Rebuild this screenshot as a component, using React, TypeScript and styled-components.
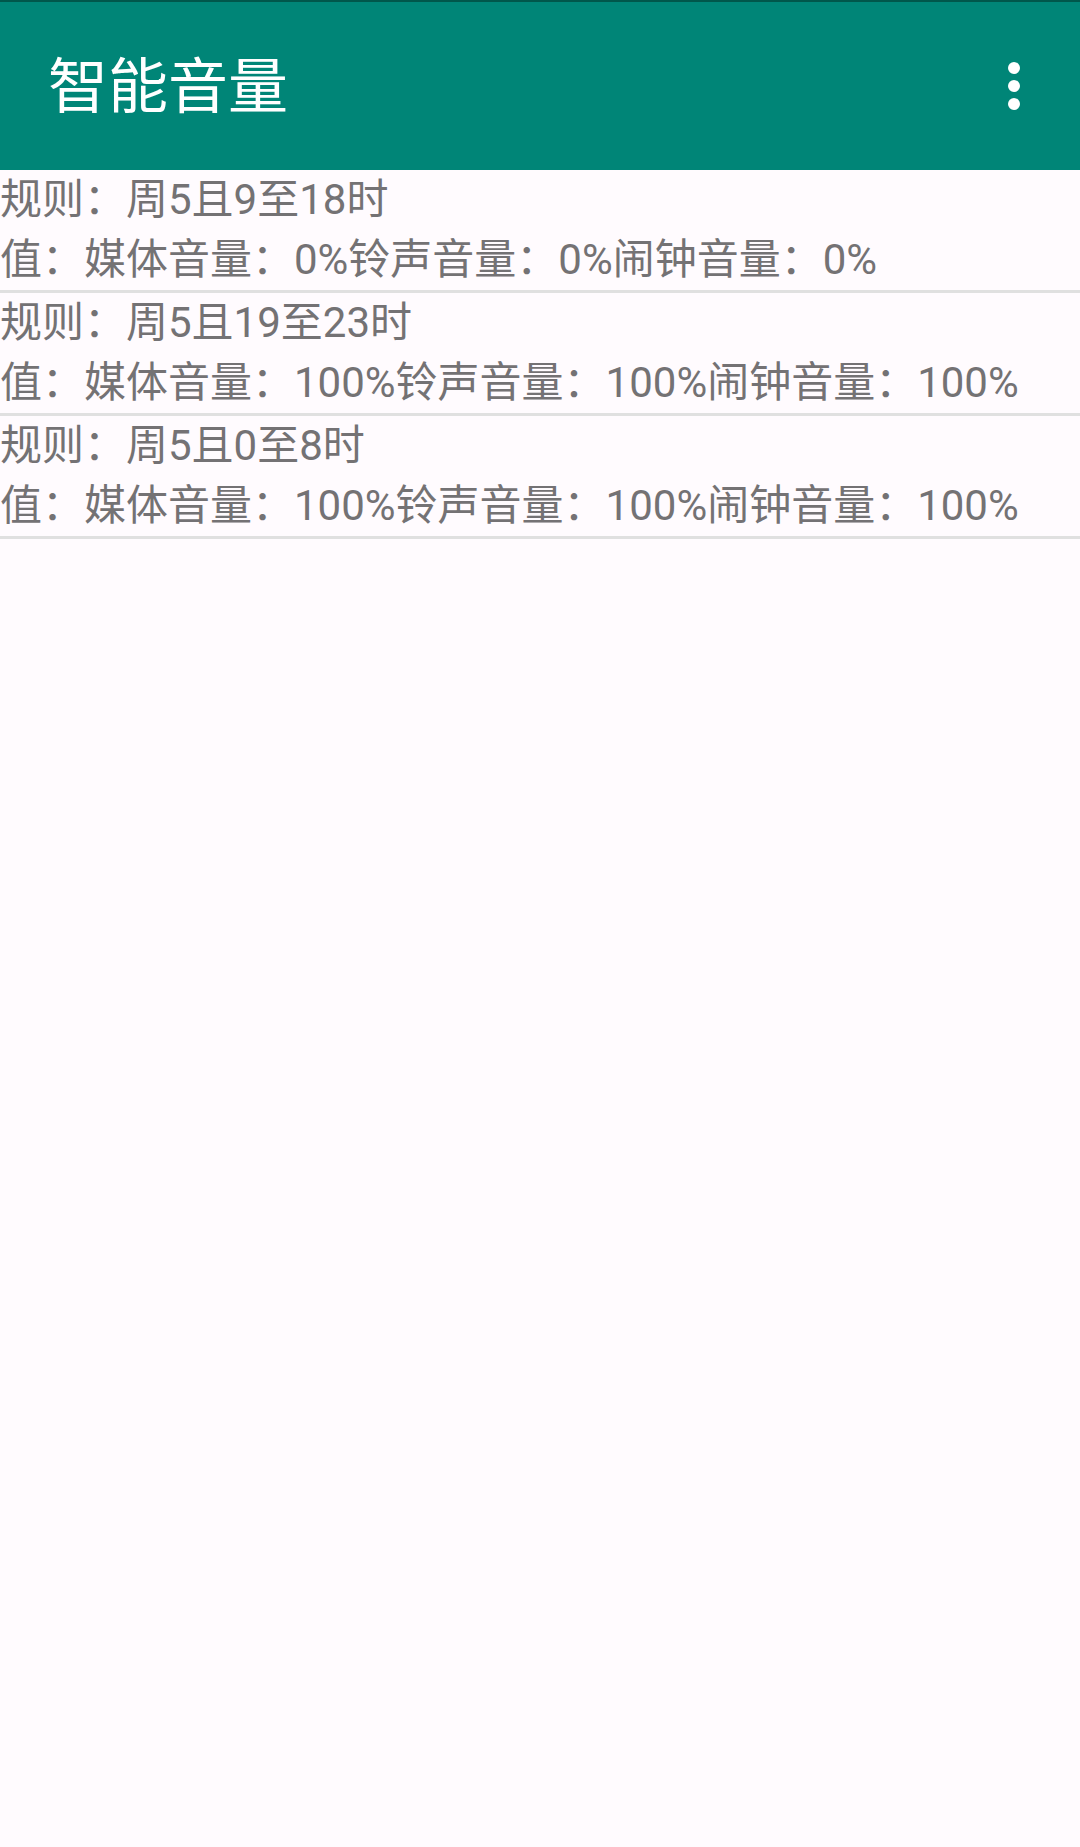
import React from "react";
import styled, { createGlobalStyle } from "styled-components";

const GlobalStyle = createGlobalStyle`
  html, body {
    margin: 0;
    padding: 0;
    background: #fffbfe;
  }
  body {
    font-family: Roboto, "Noto Sans CJK SC", sans-serif;
  }
`;

const Screen = styled.div`
  width: 1080px;
  min-height: 1847px;
  background: #fffbfe;
  display: flex;
  flex-direction: column;
`;

const StatusStrip = styled.div`
  height: 2px;
  background: #00574b;
`;

const Toolbar = styled.header`
  height: 168px;
  background: #008577;
  display: flex;
  align-items: center;
  justify-content: space-between;
  padding: 0 30px 0 48px;
  box-sizing: border-box;
`;

const Title = styled.h1`
  margin: 4px 0 0 0;
  color: #ffffff;
  font-size: 60px;
  font-weight: 400;
  font-family: Roboto, "Noto Sans CJK SC", sans-serif;
  line-height: 1;
`;

const MenuButton = styled.div`
  width: 72px;
  height: 72px;
  display: flex;
  align-items: center;
  justify-content: center;
`;

const List = styled.div`
  display: flex;
  flex-direction: column;
`;

const Item = styled.div`
  display: flex;
  flex-direction: column;
  border-bottom: 3px solid #e0e0e0;
`;

const Line = styled.div`
  font-size: 42px;
  line-height: 60px;
  color: #747274;
  white-space: nowrap;
  font-family: Roboto, "Noto Sans CJK SC", sans-serif;
`;

const rules = [
  { rule: "规则：周5且9至18时", value: "值：媒体音量：0%铃声音量：0%闹钟音量：0%" },
  { rule: "规则：周5且19至23时", value: "值：媒体音量：100%铃声音量：100%闹钟音量：100%" },
  { rule: "规则：周5且0至8时", value: "值：媒体音量：100%铃声音量：100%闹钟音量：100%" },
];

export default function App() {
  return (
    <>
      <GlobalStyle />
      <Screen>
        <StatusStrip />
        <Toolbar>
          <Title>智能音量</Title>
          <MenuButton>
            <svg width="72" height="72" viewBox="0 0 72 72">
              <circle cx="36" cy="18" r="6" fill="#fff" />
              <circle cx="36" cy="36" r="6" fill="#fff" />
              <circle cx="36" cy="54" r="6" fill="#fff" />
            </svg>
          </MenuButton>
        </Toolbar>
        <List>
          {rules.map((r, i) => (
            <Item key={i}>
              <Line>{r.rule}</Line>
              <Line>{r.value}</Line>
            </Item>
          ))}
        </List>
      </Screen>
    </>
  );
}
